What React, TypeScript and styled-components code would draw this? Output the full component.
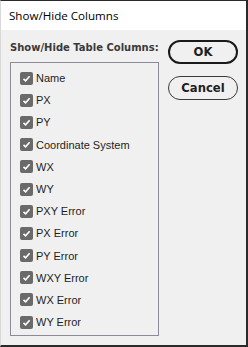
import * as React from 'react';
import styled, {createGlobalStyle} from 'styled-components';

const GlobalStyle = createGlobalStyle`
  html, body {
    margin: 0;
    padding: 0;
    background: #f0f0f0;
  }
`;

const Window = styled.div`
  width: 248px;
  height: 347px;
  box-sizing: border-box;
  display: flex;
  flex-direction: column;
  background: #f0f0f0;
  border-top: 1px solid #2a2a2a;
  border-right: 2px solid #2a2a2a;
  border-bottom: 2px solid #2a2a2a;
  border-left: 1px solid #d8d8d8;
`;

const TitleBar = styled.div`
  height: 29px;
  flex: none;
  display: flex;
  align-items: center;
  padding-left: 8px;
  background: #ffffff;
  font-family: 'Open Sans', 'Noto Sans', sans-serif;
  font-size: 11.6px;
  color: #000;
`;

const Body = styled.div`
  flex: 1;
  display: flex;
  padding: 10px 8px 0 9px;
`;

const LeftColumn = styled.div`
  display: flex;
  flex-direction: column;
  width: 149px;
`;

const GroupLabel = styled.div`
  font-family: 'DejaVu Sans', sans-serif;
  font-weight: bold;
  font-size: 10px;
  color: #3a3a3a;
  height: 16px;
  line-height: 16px;
  white-space: nowrap;
`;

const GroupBox = styled.div`
  margin-top: 6px;
  height: 274px;
  box-sizing: border-box;
  border: 1px solid #8b8b99;
  padding: 4px 0 0 9px;
  display: flex;
  flex-direction: column;
`;

const Row = styled.label`
  flex: none;
  height: 22.2px;
  display: flex;
  align-items: center;
  gap: 3px;
  font-family: 'Liberation Sans', Arial, sans-serif;
  font-size: 11px;
  color: #1e1e1e;
`;

const Box = styled.span`
  width: 13px;
  height: 13px;
  border-radius: 2px;
  background: #6a6a6a;
  display: flex;
  align-items: center;
  justify-content: center;
  flex: none;
`;

const ButtonColumn = styled.div`
  display: flex;
  flex-direction: column;
  gap: 12px;
  margin-left: 9px;
`;

const Button = styled.button<{$primary?: boolean}>`
  width: 70px;
  height: 24px;
  box-sizing: border-box;
  border-radius: 12px;
  border: ${(p) => (p.$primary ? '2px solid #1a1a1a' : '1px solid #3a3a3a')};
  background: #f0f0f0;
  font-family: 'DejaVu Sans', sans-serif;
  font-weight: bold;
  font-size: 11.6px;
  color: #1e1e1e;
  padding: 0;
`;

const columns = [
  'Name',
  'PX',
  'PY',
  'Coordinate System',
  'WX',
  'WY',
  'PXY Error',
  'PX Error',
  'PY Error',
  'WXY Error',
  'WX Error',
  'WY Error',
];

function Check(): JSX.Element {
  return (
    <Box>
      <svg width="9" height="9" viewBox="0 0 9 9">
        <path
          d="M1.5 4.8 L3.6 6.8 L7.6 2.2"
          fill="none"
          stroke="#ffffff"
          strokeWidth="1.6"
        />
      </svg>
    </Box>
  );
}

export default function App(): JSX.Element {
  return (
    <>
      <GlobalStyle />
      <Window>
        <TitleBar>Show/Hide Columns</TitleBar>
        <Body>
          <LeftColumn>
            <GroupLabel>Show/Hide Table Columns:</GroupLabel>
            <GroupBox>
              {columns.map((c) => (
                <Row key={c}>
                  <Check />
                  {c}
                </Row>
              ))}
            </GroupBox>
          </LeftColumn>
          <ButtonColumn>
            <Button $primary>OK</Button>
            <Button>Cancel</Button>
          </ButtonColumn>
        </Body>
      </Window>
    </>
  );
}
